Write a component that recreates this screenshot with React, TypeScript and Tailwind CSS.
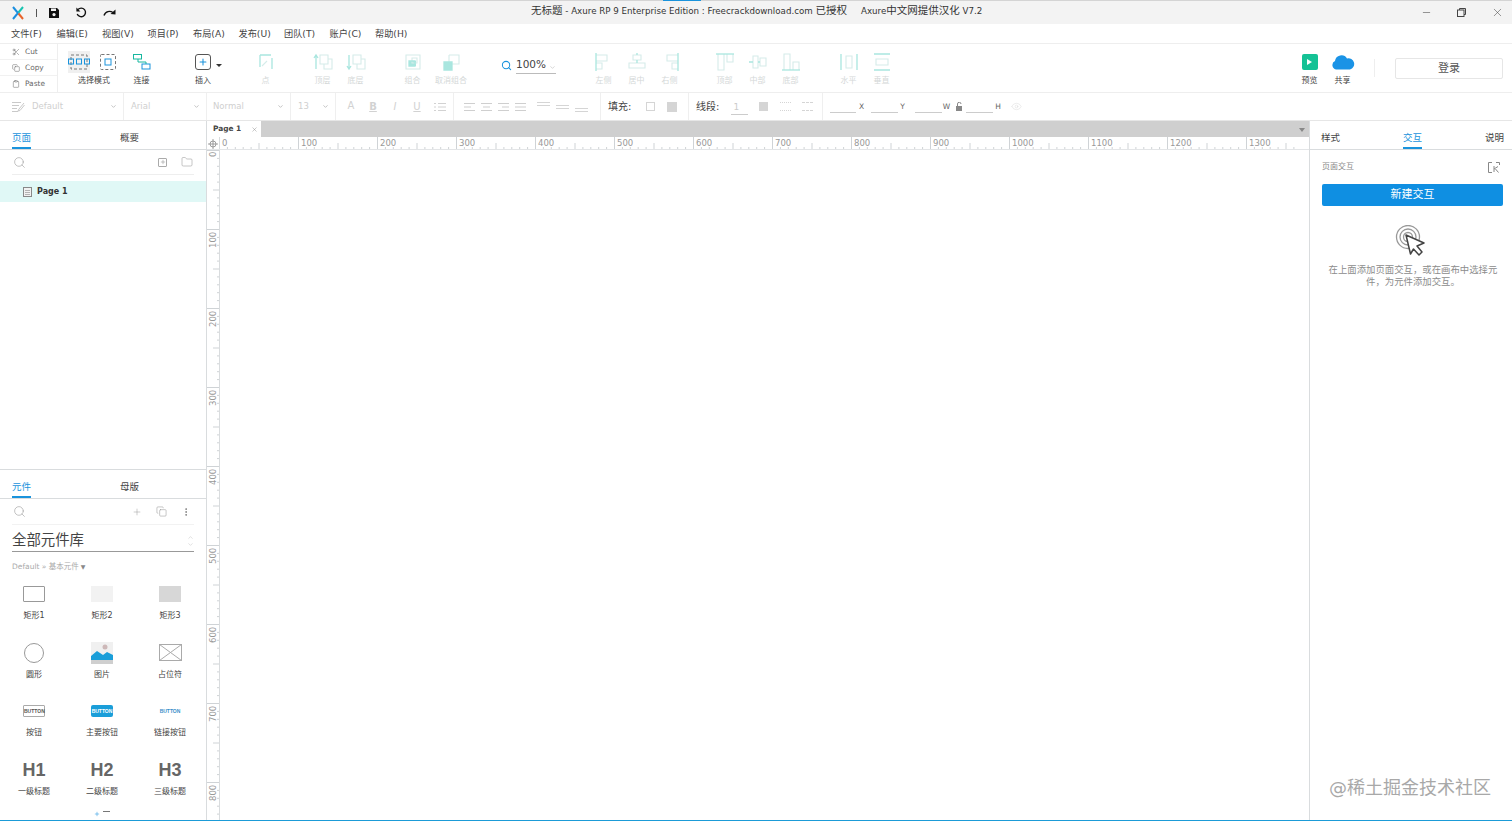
import { Fragment } from "react"
import { Search, Plus, Scissors, Copy, Clipboard, X, Minus, ChevronDown, Eye, MoreVertical, Folder } from "lucide-react"

const menus = ["文件(F)", "编辑(E)", "视图(V)", "项目(P)", "布局(A)", "发布(U)", "团队(T)", "账户(C)", "帮助(H)"]

const pale = "#a9e6df"
const soft = "#d5ecea"

function ToolItem({ label, className, children }: { label: string; className?: string; children: React.ReactNode }) {
  return (
    <div className={"flex flex-col items-center shrink-0 " + (className ?? "")}>
      <div className="h-[24px] mt-[6px] flex items-center justify-center">{children}</div>
      <span className="mt-[1px] text-[8px] leading-[12px] whitespace-nowrap">{label}</span>
    </div>
  )
}

function PaleIcon({ d, extra, fill }: { d: string; extra?: string; fill?: string }) {
  return (
    <svg width="20" height="20" viewBox="0 0 20 20" fill="none" stroke={pale} strokeWidth="1.3">
      {fill && <path d={fill} fill="#a9e6df" stroke="none" />}
      {extra && <path d={extra} stroke={soft} strokeWidth="1.1" />}
      <path d={d} />
    </svg>
  )
}

function Dropdown({ label, className }: { label: string; className: string }) {
  return (
    <div className={"flex items-center justify-between border-r border-[#efefef] h-full text-[#cfcfcf] text-[8.5px] " + className}>
      <span>{label}</span>
      <ChevronDown size={7} strokeWidth={3} className="mr-[6px] text-[#bdbdbd]" />
    </div>
  )
}

function TopRuler() {
  const ticks = Array.from({ length: 137 }, (_, i) => i)
  return (
    <svg width="1089" height="13" className="block">
      {ticks.map((i) => {
        const x = i * 7.9 - 0.5
        const h = i % 10 === 0 ? 13 : i % 5 === 0 ? 7 : 3
        return <line key={i} x1={x} x2={x} y1={13 - h} y2={13} stroke="#cfd3d6" strokeWidth="1" />
      })}
      {Array.from({ length: 14 }, (_, i) => (
        <text key={i} x={i * 79 + 2} y={9} fontSize="8.5" fill="#999" fontFamily="DejaVu Sans, sans-serif">
          {i * 100}
        </text>
      ))}
    </svg>
  )
}

function LeftRuler() {
  const ticks = Array.from({ length: 86 }, (_, i) => i)
  return (
    <svg width="13" height="671" className="block">
      {ticks.map((i) => {
        const y = i * 7.9 + 0.5
        const w = i % 10 === 0 ? 13 : i % 5 === 0 ? 7 : 3
        return <line key={i} x1={13 - w} x2={13} y1={y} y2={y} stroke="#cfd3d6" strokeWidth="1" />
      })}
      {Array.from({ length: 9 }, (_, i) => (
        <text
          key={i}
          transform={`translate(9 ${i * 79 + (i === 0 ? 7 : 19)}) rotate(-90)`}
          fontSize="8.5"
          fill="#999"
          fontFamily="DejaVu Sans, sans-serif"
        >
          {i === 0 ? "0" : i * 100}
        </text>
      ))}
    </svg>
  )
}

function PanelTabs({ left, right }: { left: string; right: string }) {
  return (
    <div className="h-[29px] flex border-b border-[#d9dcde] text-[9.5px] shrink-0">
      <div className="ml-[12px] w-[19px] h-[28px] pt-[10px] leading-[14px] border-b-[2px] border-[#1a93dc] text-[#1a93dc] whitespace-nowrap">{left}</div>
      <div className="ml-[89px] pt-[10px] leading-[14px] text-[#444]">{right}</div>
    </div>
  )
}

function Widget({ label, children }: { label: string; children: React.ReactNode }) {
  return (
    <div className="flex flex-col items-center h-[58.5px]">
      <div className="h-[26px] flex items-center justify-center">{children}</div>
      <span className="mt-[3px] text-[8px] leading-[12px] text-[#444]">{label}</span>
    </div>
  )
}

export default function App() {
  return (
    <div className="w-[1512px] h-[821px] overflow-hidden flex flex-col bg-white text-[#333] font-['DejaVu_Sans','Noto_Sans_CJK_SC',sans-serif] relative">
      {/* title bar */}
      <div className="h-[24px] shrink-0 bg-[#f3f3f3] border-t border-[#d4d4d4] flex items-center relative">
        <svg width="14" height="14" viewBox="0 0 14 14" className="ml-[11px]" fill="none" strokeWidth="2">
          <path d="M2 1 L7 7 L2 13" stroke="#1b8fe0" />
          <path d="M12 1 L7.5 6.5" stroke="#18c3b0" />
          <path d="M7.5 7.5 L12 13" stroke="#e8632a" />
        </svg>
        <div className="ml-[11px] w-px h-[8px] bg-[#555]" />
        <svg width="12" height="12" viewBox="0 0 12 12" className="ml-[11px]">
          <path d="M1 1h8l2 2v8H1z" fill="#111" />
          <rect x="3" y="1.5" width="5" height="2.5" fill="#f3f3f3" />
          <circle cx="6" cy="7.6" r="1.6" fill="#f3f3f3" />
        </svg>
        <svg width="13" height="12" viewBox="0 0 13 12" className="ml-[15px]" fill="none" stroke="#111" strokeWidth="1.4">
          <path d="M3 2.5A4.3 4.3 0 1 1 2.2 7" />
          <path d="M1.4 0.6L1.4 4.6L5.4 4.6Z" fill="#111" stroke="none" />
        </svg>
        <svg width="13" height="9" viewBox="0 0 13 9" className="ml-[15px]" fill="none" stroke="#111" strokeWidth="1.4">
          <path d="M1 7.5C2.5 3 7 2.5 10 4.5" />
          <path d="M12.5 1.5L12.5 6.5L7.5 6Z" fill="#111" stroke="none" />
        </svg>
        <div className="absolute left-[531px] top-[2px] text-[8.7px] leading-[14px] whitespace-nowrap text-[#333]">
          <span className="text-[10.5px]">无标题</span> - Axure RP 9 Enterprise Edition : Freecrackdownload.com <span className="text-[10.5px]">已授权</span>
          <span className="ml-[14px]">Axure</span>
          <span className="text-[10.5px]">中文网提供汉化</span> V7.2
        </div>
        <div className="absolute left-[663px] top-[-1px] w-[38px] h-px bg-[#1a93dc]" />
        <div className="ml-auto flex items-center text-[#444]">
          <Minus size={11} strokeWidth={1.2} />
          <svg width="11" height="11" viewBox="0 0 11 11" className="ml-[24px]" fill="none" stroke="#444">
            <rect x="1.5" y="3" width="6.5" height="6.5" />
            <path d="M3.5 3V1.5H9.5V7.5H8" />
          </svg>
          <X size={13} strokeWidth={1} className="ml-[24px] mr-[8px]" />
        </div>
      </div>

      {/* menu */}
      <div className="h-[19px] shrink-0 flex items-center pl-[11px] gap-[14px] text-[9.2px] text-[#444]">
        {menus.map((m) => (
          <span key={m} className="whitespace-nowrap leading-[12px] w-[31.5px]">{m}</span>
        ))}
      </div>

      {/* toolbar */}
      <div className="h-[50px] shrink-0 flex border-t border-b border-[#eeeeee] text-[#444]">
        <div className="w-[58px] shrink-0 border-r border-[#eeeeee] flex flex-col text-[7.4px] text-[#666]">
          {[
            { t: "Cut", I: Scissors },
            { t: "Copy", I: Copy },
            { t: "Paste", I: Clipboard },
          ].map(({ t, I }, i) => (
            <div key={t} className={"h-[16.3px] flex items-center pl-[12px] gap-[5px] " + (i < 2 ? "border-b border-[#f1f1f1]" : "")}>
              <I size={8} strokeWidth={1.5} />
              <span>{t}</span>
            </div>
          ))}
        </div>
        <ToolItem label="选择模式" className="w-[50px] ml-[11px]">
          <div className="flex items-center gap-[10px] -ml-[4px]">
            <div className="w-[22px] h-[22px] bg-[#f0f0f0] flex items-center justify-center">
              <svg width="22" height="16" viewBox="0 0 22 16" fill="none">
                <rect x="3" y="1" width="16" height="14" stroke="#777" strokeDasharray="3 2" />
                <rect x="0.5" y="5" width="5" height="5" stroke="#1a93dc" />
                <rect x="8.5" y="5" width="5" height="5" stroke="#1a93dc" />
                <rect x="16.5" y="5" width="5" height="5" stroke="#1a93dc" />
              </svg>
            </div>
            <svg width="16" height="16" viewBox="0 0 16 16" fill="none">
              <rect x="0.5" y="0.5" width="15" height="15" rx="1" stroke="#777" strokeDasharray="3 2" />
              <rect x="5" y="5" width="6" height="6" stroke="#1a93dc" />
            </svg>
          </div>
        </ToolItem>
        <ToolItem label="连接" className="w-[33px] ml-[6px]">
          <svg width="18" height="16" viewBox="0 0 18 16" fill="none">
            <rect x="0.5" y="0.5" width="8" height="4.5" stroke="#16b79f" />
            <rect x="9" y="10" width="8" height="5" stroke="#1a93dc" />
            <path d="M5 5V8H13V10" stroke="#16b79f" />
          </svg>
        </ToolItem>
        <div className="w-[40px] ml-[25px] flex shrink-0 relative">
          <ToolItem label="插入" className="w-[40px]">
            <div className="w-[16px] h-[16px] rounded-[3px] border border-[#555] flex items-center justify-center">
              <Plus size={10} strokeWidth={2.5} className="text-[#1a93dc]" />
            </div>
          </ToolItem>
          <div className="absolute left-[33px] top-[20px] border-x-[3px] border-t-[3px] border-x-transparent border-t-[#333]" />
        </div>
        <div className="flex text-[#d4d8d8]">
          <ToolItem label="点" className="w-[33px] ml-[26px]">
            <PaleIcon d="M4 3H15 M4 3V15 M16 6V17" extra="M6 14L11 9" />
          </ToolItem>
          <ToolItem label="顶层" className="w-[33px] ml-[24px]">
            <PaleIcon d="M3 17V3 M1 6L3 3L5 6" extra="M7 3h8v9H7z M11 12v5h8V7h-4" />
          </ToolItem>
          <ToolItem label="底层" className="w-[33px]">
            <PaleIcon d="M3 3V17 M1 14L3 17L5 14" extra="M7 3h8v9H7z M11 12v5h8V7h-4" />
          </ToolItem>
          <ToolItem label="组合" className="w-[33px] ml-[24px]">
            <PaleIcon d="M6 9h6v5H6z" fill="M6 9h7v5H6z" extra="M3 3H17V17H3z M9 6h5v5H9z" />
          </ToolItem>
          <ToolItem label="取消组合" className="w-[44px]">
            <PaleIcon d="M3 10h8v8H3z" fill="M3 10h8v8H3z" extra="M8 3h10v9H11 M8 3V10" />
          </ToolItem>
        </div>
        <div className="ml-[28px] w-[56px] shrink-0 flex items-start pt-[11px]">
          <Search size={11} strokeWidth={2.2} className="text-[#1a93dc] mt-[5px]" />
          <div className="ml-[4px] w-[40px] border-b border-[#bbb] h-[19px] flex items-center justify-between text-[10.5px] text-[#444] leading-[14px]">
            <span>100%</span>
            <ChevronDown size={7} className="text-[#bbb] mt-[6px]" />
          </div>
        </div>
        <div className="flex text-[#d4d8d8]">
          <ToolItem label="左侧" className="w-[33px] ml-[30px]">
            <PaleIcon d="M2 1V19" extra="M2 3H13V9H2 M2 11H8V17H2" />
          </ToolItem>
          <ToolItem label="居中" className="w-[33px]">
            <PaleIcon d="M10 1V3 M10 8V11" extra="M6 3H14V8H6z M2 11H18V16H2z" />
          </ToolItem>
          <ToolItem label="右侧" className="w-[33px]">
            <PaleIcon d="M18 1V19" extra="M18 3H7V9H18 M18 11H12V17H18" />
          </ToolItem>
          <ToolItem label="顶部" className="w-[33px] ml-[22px]">
            <PaleIcon d="M1 2H19" extra="M3 2V18H9V2 M12 2V10H18V2" />
          </ToolItem>
          <ToolItem label="中部" className="w-[33px]">
            <PaleIcon d="M1 10H5 M10 10H12" extra="M5 4H10V16H5z M12 6H18V14H12z" />
          </ToolItem>
          <ToolItem label="底部" className="w-[33px]">
            <PaleIcon d="M1 18H19" extra="M3 18V2H9V18 M12 18V10H18V18" />
          </ToolItem>
          <ToolItem label="水平" className="w-[33px] ml-[25px]">
            <PaleIcon d="M2 2V18 M18 2V18" extra="M7 4H13V16H7z" />
          </ToolItem>
          <ToolItem label="垂直" className="w-[33px]">
            <PaleIcon d="M2 2H18 M2 18H18" extra="M4 7H16V13H4z" />
          </ToolItem>
        </div>
        <ToolItem label="预览" className="w-[33px] ml-[395px]">
          <div className="w-[16px] h-[16px] rounded-[2px] bg-[#14c295] flex items-center justify-center">
            <div className="border-y-[3.5px] border-l-[5px] border-y-transparent border-l-white" />
          </div>
        </ToolItem>
        <ToolItem label="共享" className="w-[33px]">
          <svg width="24" height="16" viewBox="0 0 24 16">
            <path d="M5 15.5A4.5 4.5 0 0 1 4 7A6.5 6.5 0 0 1 16 4.5A5.5 5.5 0 0 1 19 15.5Z" fill="#1a93e6" />
          </svg>
        </ToolItem>
        <div className="ml-[15px] w-px h-[18px] mt-[15px] bg-[#eeeeee]" />
        <div className="ml-[20px] mt-[14px] w-[108px] h-[21px] pt-[1px] rounded-[2px] border border-[#e6e6e6] flex items-center justify-center text-[11px] text-[#555]">
          登录
        </div>
      </div>

      {/* format bar */}
      <div className="h-[27px] shrink-0 flex items-center">
        <div className="w-[124px] h-full flex items-center border-r border-[#efefef] text-[#cfcfcf] text-[8.5px]">
          <svg width="13" height="12" viewBox="0 0 13 12" className="ml-[12px]" fill="none" stroke="#c9c9c9">
            <path d="M0 1.5H9 M0 4.5H7 M0 7.5H5 M0 10.5H6 M12 2L7 8L6 10L8 9.5L12.5 4" />
          </svg>
          <span className="ml-[7px]">Default</span>
          <ChevronDown size={7} strokeWidth={3} className="ml-auto mr-[6px] text-[#bdbdbd]" />
        </div>
        <Dropdown label="Arial" className="w-[83px] pl-[7px]" />
        <Dropdown label="Normal" className="w-[84px] pl-[6px]" />
        <Dropdown label="13" className="w-[45px] pl-[7px]" />
        <div className="w-[118px] h-full flex items-center border-r border-[#efefef] text-[#d2d2d2] text-[10px] pl-[10px] gap-[12px]">
          <span className="w-[10px] text-center -mt-[3px]">A</span>
          <span className="w-[10px] text-center font-bold underline">B</span>
          <span className="w-[10px] text-center italic">I</span>
          <span className="w-[10px] text-center underline">U</span>
          <svg width="12" height="10" viewBox="0 0 12 10" stroke="#d2d2d2"><path d="M0 1.5H2 M4 1.5H12 M0 5H2 M4 5H12 M0 8.5H2 M4 8.5H12" /></svg>
        </div>
        <div className="w-[147px] h-full flex items-center border-r border-[#efefef] pl-[10px] gap-[6px]">
          {["M0 1.5H11 M0 5H7 M0 8.5H11", "M0 1.5H11 M2 5H9 M0 8.5H11", "M0 1.5H11 M4 5H11 M0 8.5H11", "M0 1.5H11 M0 5H11 M0 8.5H11"].map((d) => (
            <svg key={d} width="11" height="10" viewBox="0 0 11 10" stroke="#cfcfcf"><path d={d} /></svg>
          ))}
          <div className="ml-[5px] flex gap-[6px]">
            <svg width="13" height="12" stroke="#d5d5d5"><path d="M0 1.5H13 M0 4.5H13" /></svg>
            <svg width="13" height="12" stroke="#d5d5d5"><path d="M0 4.5H13 M0 7.5H13" /></svg>
            <svg width="13" height="12" stroke="#d5d5d5"><path d="M0 7.5H13 M0 10.5H13" /></svg>
          </div>
        </div>
        <div className="w-[88px] h-full flex items-center border-r border-[#efefef] pl-[7px] text-[10px] text-[#444]">
          <span>填充:</span>
          <div className="ml-[15px] w-[9px] h-[9px] border border-[#d5d5d5]" />
          <div className="ml-[12px] w-[10px] h-[10px] bg-[#d5d5d5]" />
        </div>
        <div className="w-[134px] h-full flex items-center border-r border-[#efefef] pl-[7px] text-[10px] text-[#444]">
          <span>线段:</span>
          <span className="ml-[12px] w-[17px] border-b border-[#ccc] text-[#ccc] text-[9px] leading-[13px] mt-[2px] pl-[2px]">1</span>
          <div className="ml-[11px] w-[9px] h-[9px] bg-[#d5d5d5]" />
          <div className="ml-[12px] w-[11px] h-[9px] border-y border-dotted border-[#d5d5d5]" />
          <div className="ml-[11px] w-[11px] h-[9px] border-y border-dashed border-[#d5d5d5]" />
        </div>
        <div className="flex items-center pl-[7px] text-[7.5px] text-[#666]">
          <div className="w-[26px] h-[13px] border-b border-[#ccc]" /><span className="ml-[3px]">X</span>
          <div className="ml-[7px] w-[27px] h-[13px] border-b border-[#ccc]" /><span className="ml-[2px]">Y</span>
          <div className="ml-[10px] w-[27px] h-[13px] border-b border-[#ccc]" /><span className="ml-[1px]">W</span>
          <svg width="8" height="9" viewBox="0 0 8 9" className="ml-[6px]" fill="none"><rect x="0" y="4" width="6" height="5" fill="#888" /><path d="M1.5 4V2A1.7 1.7 0 0 1 5 2" stroke="#888" /></svg>
          <div className="ml-[2px] w-[27px] h-[13px] border-b border-[#ccc]" /><span className="ml-[2px]">H</span>
          <Eye size={11} strokeWidth={1} className="ml-[10px] text-[#d8d8d8]" />
        </div>
      </div>

      {/* main */}
      <div className="flex-1 flex min-h-0 border-t border-[#e6e6e6]">
        {/* left panels */}
        <div className="w-[207px] shrink-0 border-r border-[#d9dcde] flex flex-col min-h-0">
          <div className="h-[349px] shrink-0 flex flex-col border-b border-[#d9dcde]">
            <PanelTabs left="页面" right="概要" />
            <div className="h-[25px] mb-[1px] mx-[12px] shrink-0 flex items-center border-b border-[#eeeeee] text-[#999]">
              <Search size={13} strokeWidth={1.1} className="ml-[1px]" />
              <div className="ml-auto w-[9px] h-[9px] border border-[#aaa] rounded-[1px] flex items-center justify-center">
                <Plus size={6} strokeWidth={2} className="text-[#888]" />
              </div>
              <Folder size={12} strokeWidth={1.1} className="ml-[14px] mr-[1px]" />
            </div>
            <div className="mt-[5px] h-[21px] bg-[#e0f8f6] flex items-center pl-[23px]">
              <svg width="9" height="10" viewBox="0 0 9 10" fill="#f2f2f2" stroke="#888">
                <rect x="0.5" y="0.5" width="8" height="9" />
                <path d="M2 3.5H7 M2 5.5H7 M2 7.5H7" strokeWidth="0.6" />
              </svg>
              <span className="ml-[5px] text-[8px] font-bold text-[#333]">Page 1</span>
            </div>
          </div>
          <div className="flex-1 min-h-0 overflow-hidden flex flex-col">
            <PanelTabs left="元件" right="母版" />
            <div className="h-[26px] mx-[12px] shrink-0 flex items-center border-b border-[#f2f2f2] text-[#999]">
              <Search size={13} strokeWidth={1.1} className="ml-[1px]" />
              <Plus size={10} strokeWidth={1.2} className="ml-auto" />
              <Copy size={11} strokeWidth={1.2} className="ml-[14px]" />
              <MoreVertical size={10} strokeWidth={2} className="ml-[14px] mr-[3px] text-[#777]" />
            </div>
            <div className="mx-[12px] mt-[4px] h-[23px] pt-[2px] shrink-0 flex items-center justify-between border-b border-[#999] text-[14.4px] text-[#444]">
              <span>全部元件库</span>
              <div className="flex flex-col text-[#ccc]">
                <ChevronDown size={7} className="rotate-180" />
                <ChevronDown size={7} />
              </div>
            </div>
            <div className="ml-[12px] mt-[9px] shrink-0 text-[7.5px] leading-[12px] text-[#aaa] flex items-center gap-[2px]">
              Default » 基本元件 <span className="text-[#888] text-[6px]">▼</span>
            </div>
            <div className="mt-[8px] grid grid-cols-[68px_68px_68px] text-center">
              <Widget label="矩形1"><div className="w-[22px] h-[16px] border border-[#999] rounded-[1px]" /></Widget>
              <Widget label="矩形2"><div className="w-[22px] h-[16px] bg-[#f2f2f2]" /></Widget>
              <Widget label="矩形3"><div className="w-[22px] h-[16px] bg-[#d7d7d7]" /></Widget>
              <Widget label="圆形"><div className="w-[20px] h-[20px] rounded-full border border-[#999]" /></Widget>
              <Widget label="图片">
                <svg width="22" height="22" viewBox="0 0 22 22">
                  <rect width="22" height="22" fill="#f0f0f0" />
                  <rect y="18" width="22" height="4" fill="#cfcfcf" />
                  <path d="M0 14L6 9L12 13L16 10L22 13V18H0Z" fill="#1a9ed9" />
                  <circle cx="14" cy="5" r="2.5" fill="#cdb8b8" />
                </svg>
              </Widget>
              <Widget label="占位符">
                <svg width="23" height="17" viewBox="0 0 23 17" fill="none" stroke="#aaa">
                  <rect x="0.5" y="0.5" width="22" height="16" />
                  <path d="M0.5 0.5L22.5 16.5 M22.5 0.5L0.5 16.5" />
                </svg>
              </Widget>
              <Widget label="按钮">
                <div className="w-[22px] h-[12px] border border-[#aaa] rounded-[1px] text-[5px] font-bold leading-[10px] text-[#555] font-['Liberation_Sans',sans-serif]">BUTTON</div>
              </Widget>
              <Widget label="主要按钮">
                <div className="w-[22px] h-[12px] bg-[#1a9ed9] rounded-[2px] text-[5px] font-bold leading-[12px] text-white font-['Liberation_Sans',sans-serif]">BUTTON</div>
              </Widget>
              <Widget label="链接按钮">
                <div className="w-[22px] h-[12px] text-[5px] font-bold leading-[12px] text-[#3a8fc9] font-['Liberation_Sans',sans-serif]">BUTTON</div>
              </Widget>
              {["H1", "H2", "H3"].map((h, i) => (
                <Fragment key={h}>
                  <Widget label={["一级标题", "二级标题", "三级标题"][i]}>
                    <span className="text-[18px] font-bold font-['Liberation_Sans',sans-serif] text-[#666] leading-[20px]">{h}</span>
                  </Widget>
                </Fragment>
              ))}
              <div />
              <div className="flex justify-center gap-[3px] text-[#777] -mt-[4px]">
                <Plus size={6} strokeWidth={2} className="text-[#1a93dc]" />
                <div className="w-[7px] h-[3px] border-t border-[#777]" />
              </div>
            </div>
          </div>
        </div>

        {/* canvas */}
        <div className="flex-1 min-w-0 flex flex-col border-r border-[#d9dcde]">
          <div className="h-[16px] shrink-0 flex bg-[#cfcfcf]">
            <div className="w-[54px] bg-white flex items-center pl-[6px] text-[7.4px] font-bold text-[#444]">
              Page 1
              <X size={7} strokeWidth={1.5} className="ml-[10px] text-[#888]" />
            </div>
            <div className="ml-auto mr-[4px] mt-[7px] w-0 h-0 border-x-[3.5px] border-t-[4px] border-x-transparent border-t-[#888]" />
          </div>
          <div className="h-[13px] shrink-0 flex overflow-hidden border-b border-[#e3e5e7]">
            <div className="w-[13px] h-[13px] shrink-0 border-r border-[#d9dcde] flex items-center justify-center">
              <svg width="10" height="10" viewBox="0 0 10 10" fill="none" stroke="#888" strokeWidth="0.8">
                <circle cx="5" cy="5" r="3" />
                <path d="M5 0V10 M0 5H10" />
              </svg>
            </div>
            <TopRuler />
          </div>
          <div className="flex-1 min-h-0 flex overflow-hidden">
            <div className="w-[13px] shrink-0 border-r border-[#d9dcde] overflow-hidden">
              <LeftRuler />
            </div>
            <div className="flex-1 bg-white" />
          </div>
        </div>

        {/* right panel */}
        <div className="w-[202px] shrink-0 flex flex-col">
          <div className="h-[29px] shrink-0 flex border-b border-[#d9dcde] text-[9.5px] text-[#444] pl-[11px]">
            <div className="pt-[10px] leading-[14px]">样式</div>
            <div className="ml-[63px] w-[19px] h-[28px] pt-[10px] leading-[14px] border-b-[2px] border-[#1a93dc] text-[#1a93dc] whitespace-nowrap">交互</div>
            <div className="ml-[63px] pt-[10px] leading-[14px] whitespace-nowrap">说明</div>
          </div>
          <div className="ml-[12px] mr-[9px] mt-[10px] h-[14px] flex items-center justify-between text-[8px] text-[#888]">
            <span>页面交互</span>
            <svg width="12" height="11" viewBox="0 0 12 11" fill="none" stroke="#888" className="mr-[3px]">
              <path d="M4 .5H.5V10.5H4 M8 .5H11.5V3" />
              <path d="M6 4V10 M6 7L10 4.5 M7.5 7L10.5 10.5" />
            </svg>
          </div>
          <div className="ml-[12px] mr-[9px] mt-[10px] h-[22px] rounded-[2px] bg-[#0f8fe2] text-white text-[11px] flex items-center justify-center shrink-0">
            新建交互
          </div>
          <div className="mt-[19px] flex justify-center">
            <svg width="32" height="32" viewBox="0 0 32 32" fill="none">
              <circle cx="13" cy="12" r="11.5" stroke="#999" strokeWidth="1.3" />
              <circle cx="13" cy="12" r="8" stroke="#999" strokeWidth="1.3" />
              <circle cx="13" cy="12" r="4.5" stroke="#999" strokeWidth="1.3" />
              <path d="M11 10L29 18L22 21L27 27L24 30L18.5 24L15.5 29Z" fill="#fff" stroke="#444" strokeWidth="1.5" strokeLinejoin="round" />
            </svg>
          </div>
          <p className="mt-[7px] ml-[14px] mr-[10px] text-[9.4px] leading-[12px] text-[#8c8c8c] text-center">
            在上面添加页面交互，或在画布中选择元件，为元件添加交互。
          </p>
        </div>
      </div>

      {/* watermark */}
      <div className="absolute left-[1329px] top-[776px] text-[18px] leading-[24px] text-[#a8a8a8] whitespace-nowrap">@稀土掘金技术社区</div>
      <div className="absolute left-0 right-0 bottom-0 h-[1.5px] bg-[#1b9bd7]" />
    </div>
  )
}
